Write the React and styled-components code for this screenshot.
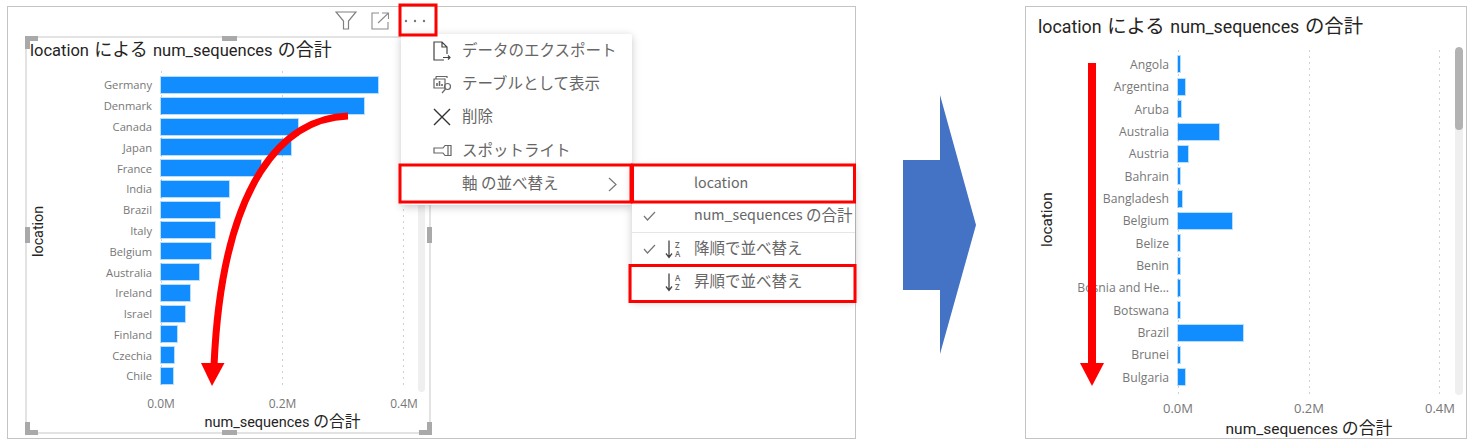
import React from "react";
import styled, { createGlobalStyle } from "styled-components";

const Global = createGlobalStyle`
  html, body { margin: 0; padding: 0; background: #fff; }
  body { font-family: "Noto Sans CJK JP", sans-serif; }
`;

const Page = styled.div`
  display: flex;
  align-items: flex-start;
  width: 1479px;
  height: 448px;
  padding: 6px 0 0 7px;
  box-sizing: border-box;
  overflow: hidden;
`;

const Panel = styled.section`
  position: relative;
  box-sizing: border-box;
  flex: none;
  width: ${(p) => p.$width}px;
  height: 433px;
  border: 1px solid #c4c4c4;
`;

const VisualColumn = styled.div`
  width: 406px;
  margin-left: 17px;
`;

const Toolbar = styled.div`
  display: flex;
  justify-content: flex-end;
  align-items: center;
  gap: 14px;
  height: 29px;
  padding: 0 5px 2px 0;
  box-sizing: border-box;
`;

const Frame = styled.div`
  position: relative;
  box-sizing: border-box;
  height: 398px;
  border: 2px solid #e3e3e3;
`;

const Handle = styled.span`
  position: absolute;
  background: #a9a9a9;
  ${(p) => (p.$edge === "h" ? "width: 15px; height: 5px; left: 195px;" : "width: 5px; height: 16px; top: 189px;")}
  ${(p) => p.$pos}
`;

const Corner = styled.span`
  position: absolute;
  box-sizing: border-box;
  width: 13px;
  height: 13px;
  border: 0 solid #a9a9a9;
  ${(p) => p.$pos}
`;

const Cjk = styled.span`
  font-size: 1.09em;
`;

const Latin = styled.span`
  font-size: 0.92em;
`;

const ChartTitle = styled.h2`
  margin: 0;
  font-family: Roboto, "Noto Sans CJK JP", sans-serif;
  font-weight: 400;
  font-size: ${(p) => p.$size}px;
  line-height: ${(p) => p.$line}px;
  height: ${(p) => p.$line}px;
  word-spacing: 1.2px;
  color: #252423;
  padding: ${(p) => p.$top}px 0 0 ${(p) => p.$left}px;
  white-space: nowrap;
`;

const ChartBody = styled.div`
  display: flex;
  margin-top: ${(p) => p.$top}px;
  margin-left: ${(p) => p.$left}px;
`;

const YTitle = styled.div`
  flex: none;
  width: 22px;
  writing-mode: vertical-rl;
  transform: rotate(180deg);
  text-align: center;
  height: ${(p) => p.$height}px;
  line-height: 22px;
  font-family: Roboto, sans-serif;
  font-size: ${(p) => p.$size}px;
  color: #252423;
`;

const PlotColumn = styled.div`
  flex: none;
`;

const Plot = styled.div`
  position: relative;
  height: ${(p) => p.$height}px;
  padding-top: ${(p) => p.$pad}px;
  box-sizing: border-box;
`;

const GridLayer = styled.div`
  position: absolute;
  top: 0;
  bottom: 0;
  left: ${(p) => p.$left}px;
  width: ${(p) => p.$width}px;
  display: flex;
  justify-content: space-between;
`;

const GridLine = styled.i`
  width: 1px;
  background-image: linear-gradient(#d0d0d0 2px, transparent 2px);
  background-size: 1px 6px;
`;

const Row = styled.div`
  position: relative;
  display: flex;
  align-items: center;
  height: ${(p) => p.$height}px;
`;

const RowLabel = styled.span`
  flex: none;
  width: ${(p) => p.$width}px;
  margin-right: 9px;
  text-align: right;
  font-family: "Open Sans", sans-serif;
  font-size: ${(p) => p.$size}px;
  color: #777;
  white-space: nowrap;
`;

const Bar = styled.span`
  height: 16px;
  background: #118dff;
  box-shadow: 0 0 0 1px rgba(17, 141, 255, 0.3);
`;

const Axis = styled.div`
  display: flex;
  justify-content: space-between;
  margin-top: ${(p) => p.$top}px;
  margin-left: ${(p) => p.$left - 20}px;
  width: ${(p) => p.$width + 40}px;
`;

const Tick = styled.span`
  width: 40px;
  text-align: center;
  font-family: "Open Sans", sans-serif;
  font-size: ${(p) => p.$size}px;
  line-height: 16px;
  color: #777;
`;

const XTitle = styled.div`
  margin-left: ${(p) => p.$left - 40}px;
  width: ${(p) => p.$width + 80}px;
  margin-top: ${(p) => p.$top}px;
  text-align: center;
  font-family: Roboto, "Noto Sans CJK JP", sans-serif;
  font-size: ${(p) => p.$size}px;
  line-height: 18px;
  height: 18px;
  color: #252423;
  white-space: nowrap;
`;

const ScrollTrack = styled.div`
  position: absolute;
  top: ${(p) => p.$top}px;
  left: ${(p) => p.$left}px;
  width: ${(p) => p.$width}px;
  height: ${(p) => p.$height}px;
  background: #efefef;
  border-radius: 4px;
  overflow: hidden;
`;

const ScrollThumb = styled.div`
  height: ${(p) => p.$height}px;
  background: #b3b3b3;
  border-radius: 4px;
`;

const Menu = styled.div`
  position: absolute;
  box-sizing: border-box;
  left: ${(p) => p.$left}px;
  top: ${(p) => p.$top}px;
  width: ${(p) => p.$width}px;
  padding: ${(p) => p.$pad};
  background: #fff;
  border-radius: 2px;
  box-shadow: 0 2px 9px rgba(0, 0, 0, 0.22);
  font-size: 15.5px;
  color: #666;
`;

const MenuItem = styled.div`
  display: flex;
  align-items: center;
  box-sizing: border-box;
  height: ${(p) => p.$height || 33.4}px;
  padding-left: ${(p) => p.$pad}px;
  padding-bottom: 4px;
  white-space: nowrap;
`;

const IconSlot = styled.span`
  flex: none;
  display: flex;
  align-items: center;
  margin-top: 4px;
  width: ${(p) => p.$width}px;
`;

const MenuChevron = styled.span`
  display: flex;
  margin-left: auto;
  margin-right: 15px;
  margin-top: 4px;
`;

const Divider = styled.hr`
  margin: 0;
  border: 0;
  border-top: 1px solid #e6e6e6;
  height: 0;
`;

const Overlay = styled.svg`
  position: absolute;
  left: 0;
  top: 0;
  width: 100%;
  height: 100%;
  overflow: visible;
  pointer-events: none;
`;

const BlueArrow = styled.svg`
  flex: none;
  margin: 89px 49px 0 47px;
`;

const SortLetters = styled.text`
  font-family: "Open Sans", sans-serif;
  font-size: 8px;
  font-weight: 600;
  fill: #666;
`;

const line = { fill: "none", stroke: "#666", strokeWidth: 1.2 };

const Funnel = () => (
  <svg width="22" height="19" viewBox="0 0 22 19">
    <path d="M1 1 H21 L13.5 10 V18 H8.5 V10 Z" fill="none" stroke="#808080" strokeWidth="1.2" />
  </svg>
);
const Expand = () => (
  <svg width="19" height="18" viewBox="0 0 19 18">
    <path d="M8 1 H1 V17 H17 V10 M7 11 L17.5 1 M11 1 H17.5 V7" fill="none" stroke="#8c8c8c" strokeWidth="1.1" />
  </svg>
);
const Dots = () => (
  <svg width="22" height="4" viewBox="0 0 22 4">
    <circle cx="2" cy="2" r="1.2" fill="#777" />
    <circle cx="11" cy="2" r="1.2" fill="#777" />
    <circle cx="20" cy="2" r="1.2" fill="#777" />
  </svg>
);
const FileIcon = () => (
  <svg width="18" height="20" viewBox="0 0 18 20">
    <path d="M14 13 V6 L9 1 H1 V19 H11 M9 1 V6 H14" {...line} stroke="#444" />
    <path d="M10 16.5 H17 M15 14.5 L17 16.5 L15 18.5" {...line} stroke="#444" />
  </svg>
);
const TableIcon = () => (
  <svg width="19" height="19" viewBox="0 0 19 19">
    <path d="M3 1.5 H14 V3 M1 4 H12 V13 H1 Z M3 1.5 V4" {...line} />
    <path d="M4 11 V8 M6.5 11 V6 M9 11 V9" {...line} strokeWidth="1.6" />
    <circle cx="14.5" cy="11.5" r="3" {...line} />
    <path d="M12.5 14 L9 18" {...line} />
  </svg>
);
const CloseIcon = () => (
  <svg width="18" height="18" viewBox="0 0 18 18">
    <path d="M1 1 L17 17 M17 1 L1 17" fill="none" stroke="#333" strokeWidth="1.4" />
  </svg>
);
const SpotIcon = () => (
  <svg width="19" height="13" viewBox="0 0 19 13">
    <path d="M1 4 H10 L12 1.5 H18 V11.5 H12 L10 9 H1 Z M15 1.5 V11.5" {...line} />
  </svg>
);
const Chevron = () => (
  <svg width="9" height="15" viewBox="0 0 9 15">
    <path d="M1 1 L8 7.500 L1 14" {...line} stroke="#777" />
  </svg>
);
const Check = () => (
  <svg width="13" height="10" viewBox="0 0 13 10">
    <path d="M1 5 L4.500 9 L12 1" {...line} stroke="#777" />
  </svg>
);
const Sort = ({ top, bottom }) => (
  <svg width="18" height="20" viewBox="0 0 18 20">
    <path d="M4 1.500 V18 M1 14.500 L4 18.500 L7 14.500" fill="none" stroke="#444" strokeWidth="1.3" />
    <SortLetters x="10" y="8.500">{top}</SortLetters>
    <SortLetters x="10" y="17.500">{bottom}</SortLetters>
  </svg>
);

const leftData = [
  ["Germany", 217], ["Denmark", 203], ["Canada", 137], ["Japan", 130], ["France", 100],
  ["India", 68], ["Brazil", 59], ["Italy", 54], ["Belgium", 50], ["Australia", 38],
  ["Ireland", 29], ["Israel", 24], ["Finland", 16], ["Czechia", 13], ["Chile", 12],
];
const rightData = [
  ["Angola", 2], ["Argentina", 7], ["Aruba", 2.5], ["Australia", 41], ["Austria", 10],
  ["Bahrain", 2], ["Bangladesh", 3.5], ["Belgium", 54], ["Belize", 2], ["Benin", 2],
  ["Bosnia and He…", 2], ["Botswana", 2], ["Brazil", 64.5], ["Brunei", 1.5], ["Bulgaria", 7],
];

const Chart = ({ c, data }) => (
  <ChartBody $top={c.bodyTop} $left={c.bodyLeft}>
    <YTitle $size={c.yTitleSize} $height={c.yHeight}>location</YTitle>
    <PlotColumn>
      <Plot $height={c.plotHeight} $pad={c.plotPad}>
        <GridLayer $left={c.labelW + 9} $width={c.plotW}>
          <GridLine /><GridLine /><GridLine />
        </GridLayer>
        {data.map(([name, w]) => (
          <Row key={name} $height={c.rowH}>
            <RowLabel $width={c.labelW} $size={c.labelSize}>{name}</RowLabel>
            <Bar style={{ width: w }} />
          </Row>
        ))}
      </Plot>
      <Axis $top={c.axisTop} $left={c.labelW + 9} $width={c.plotW}>
        <Tick $size={c.tickSize}>0.0M</Tick>
        <Tick $size={c.tickSize}>0.2M</Tick>
        <Tick $size={c.tickSize}>0.4M</Tick>
      </Axis>
      <XTitle $top={c.xTop} $left={c.labelW + 9} $width={c.plotW} $size={c.xSize}>num_sequences <Cjk>の合計</Cjk></XTitle>
    </PlotColumn>
  </ChartBody>
);

const leftCfg = {
  bodyTop: 9, bodyLeft: 0, yTitleSize: 14.3, yHeight: 321, plotHeight: 317, plotPad: 3.6, labelW: 103, plotW: 243,
  rowH: 20.79, labelSize: 11.2, axisTop: 8, tickSize: 12, xTop: 1, xSize: 14.5,
};
const rightCfg = {
  bodyTop: 11, bodyLeft: 10, yTitleSize: 15.3, yHeight: 340, plotHeight: 345, plotPad: 3.3, labelW: 111, plotW: 262,
  rowH: 22.35, labelSize: 12.2, axisTop: 5, tickSize: 13, xTop: 2.500, xSize: 15.5,
};

const TitleText = () => (
  <>location <Cjk>による</Cjk> num_sequences <Cjk>の合計</Cjk></>
);

export default function App() {
  return (
    <>
      <Global />
      <Page>
        <Panel $width={849}>
          <VisualColumn>
            <Toolbar>
              <Funnel />
              <Expand />
              <Dots />
            </Toolbar>
            <Frame>
              <ChartTitle $size={16.5} $line={24} $left={3} $top={0}><TitleText /></ChartTitle>
              <Chart c={leftCfg} data={leftData} />
              <ScrollTrack $top={20} $left={391} $width={7} $height={334} />
              <Corner $pos="left:-2px; top:-2px; border-left-width:5px; border-top-width:5px;" />
              <Corner $pos="left:-2px; bottom:-3px; border-left-width:5px; border-bottom-width:5px;" />
              <Corner $pos="right:-3px; bottom:-3px; border-right-width:5px; border-bottom-width:5px;" />
              <Handle $edge="h" $pos="top:-2px;" />
              <Handle $edge="h" $pos="bottom:-3px;" />
              <Handle $edge="v" $pos="left:-2px;" />
              <Handle $edge="v" $pos="right:-3px;" />
            </Frame>
          </VisualColumn>

          <Menu $left={393} $top={27} $width={231} $pad="0 0 4px">
            <MenuItem $pad={32}><IconSlot $width={29}><FileIcon /></IconSlot>データのエクスポート</MenuItem>
            <MenuItem $pad={32}><IconSlot $width={29}><TableIcon /></IconSlot>テーブルとして表示</MenuItem>
            <MenuItem $pad={32}><IconSlot $width={29}><CloseIcon /></IconSlot>削除</MenuItem>
            <MenuItem $pad={32}><IconSlot $width={29}><SpotIcon /></IconSlot>スポットライト</MenuItem>
            <MenuItem $pad={32}><IconSlot $width={29} />軸 の並べ替え<MenuChevron><Chevron /></MenuChevron></MenuItem>
          </Menu>

          <Menu $left={624} $top={159} $width={223} $pad="1px 0 2px">
            <MenuItem $height={32.6} $pad={11}><IconSlot $width={22} /><IconSlot $width={29} /><Latin>location</Latin></MenuItem>
            <MenuItem $height={32.4} $pad={11}><IconSlot $width={22}><Check /></IconSlot><IconSlot $width={29} /><Latin>num_sequences</Latin>&nbsp;の合計</MenuItem>
            <Divider />
            <MenuItem $height={32.6} $pad={11}><IconSlot $width={22}><Check /></IconSlot><IconSlot $width={29}><Sort top="Z" bottom="A" /></IconSlot>降順で並べ替え</MenuItem>
            <MenuItem $height={32.6} $pad={11}><IconSlot $width={22} /><IconSlot $width={29}><Sort top="A" bottom="Z" /></IconSlot>昇順で並べ替え</MenuItem>
          </Menu>

          <Overlay viewBox="8 7 847 431" preserveAspectRatio="xMinYMin">
            <g fill="none" stroke="#f00" strokeWidth="3">
              <rect x="400" y="5" width="36" height="30" />
              <rect x="400" y="165" width="231" height="37" />
              <rect x="632.5" y="165" width="222" height="37" />
              <rect x="630" y="265.5" width="225" height="36" />
            </g>
            <path d="M348 116 C 285 118 222 180 214 366" fill="none" stroke="#f00" strokeWidth="7" />
            <path d="M201 363 H224.500 L212 386 Z" fill="#f00" />
          </Overlay>
        </Panel>

        <BlueArrow width="73" height="260" viewBox="0 0 73 260">
          <path d="M0 65 H37 V0 L73 130 L37 259 V195 H0 Z" fill="#4472c4" />
        </BlueArrow>

        <Panel $width={442}>
          <ChartTitle $size={17.8} $line={24} $left={12} $top={8}><TitleText /></ChartTitle>
          <Chart c={rightCfg} data={rightData} />
          <ScrollTrack $top={40} $left={429} $width={8} $height={348}>
            <ScrollThumb $height={83} />
          </ScrollTrack>
          <Overlay viewBox="1026 7 440 431" preserveAspectRatio="xMinYMin">
            <path d="M1092 63 V366" fill="none" stroke="#f00" strokeWidth="8" />
            <path d="M1080 363 H1104 L1092 386 Z" fill="#f00" />
          </Overlay>
        </Panel>
      </Page>
    </>
  );
}
